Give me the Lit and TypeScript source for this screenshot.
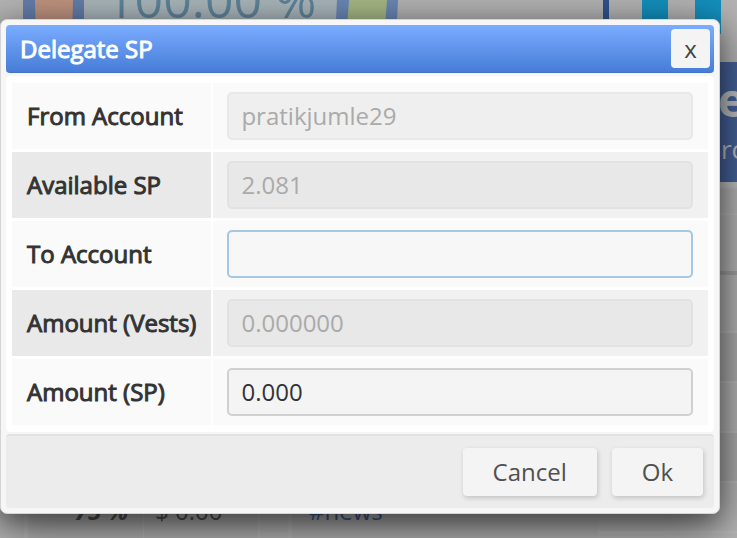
import { LitElement, html, css, svg } from "lit";
import { customElement } from "lit/decorators.js";

interface Field {
  id: string;
  label: string;
  value: string;
  disabled: boolean;
  active?: boolean;
}

const FIELDS: Field[] = [
  { id: "from", label: "From Account", value: "pratikjumle29", disabled: true },
  { id: "available", label: "Available SP", value: "2.081", disabled: true },
  { id: "to", label: "To Account", value: "", disabled: false, active: true },
  { id: "vests", label: "Amount (Vests)", value: "0.000000", disabled: true },
  { id: "sp", label: "Amount (SP)", value: "0.000", disabled: false },
];

@customElement("dashboard-backdrop")
class DashboardBackdrop extends LitElement {
  static styles = css`
    :host {
      display: grid;
      grid-template-columns: 1fr 139px;
      height: 100%;
      overflow: hidden;
      background: #b4b4b4;
      color: #505050;
      font-family: "Open Sans", sans-serif;
    }
    .main {
      display: flex;
      flex-direction: column;
      justify-content: space-between;
      min-width: 0;
    }
    .gauge {
      display: block;
      width: 598px;
      height: 40px;
    }
    .cards {
      display: grid;
      grid-template-columns: 236px 1fr;
      gap: 28px;
      padding-left: 24px;
    }
    .card {
      box-sizing: border-box;
      height: 36px;
      background: #b2b2b2;
      border-left: 4px solid #b8b8b8;
      font-size: 24px;
      line-height: 18px;
      white-space: nowrap;
    }
    .stats {
      display: grid;
      grid-template-columns: 116px 1fr;
      border-right: 2px solid #b8b8b8;
    }
    .share {
      padding-right: 15px;
      text-align: right;
      font-weight: 700;
      font-style: italic;
      border-right: 1px solid #b8b8b8;
    }
    .money {
      padding-left: 11px;
    }
    .tag {
      display: block;
      padding-left: 17px;
      color: #3a5b8f;
      text-decoration: none;
    }
    .side {
      display: flex;
      flex-direction: column;
      min-width: 0;
    }
    .bars {
      display: block;
      width: 139px;
      height: 62px;
    }
    .banner {
      box-sizing: border-box;
      height: 120px;
      padding: 10px 0 0 107px;
      background: #46629a;
      color: #c0c0c0;
      white-space: nowrap;
    }
    .big {
      padding-left: 13px;
      font-size: 46px;
      font-weight: 700;
      line-height: 54px;
    }
    .small {
      font-size: 26px;
      line-height: 46px;
    }
    .list {
      flex: 1;
      display: grid;
      grid-template-rows: 7px 26px 60px 58px;
      grid-auto-rows: 50px;
      overflow: hidden;
    }
    .item {
      border-bottom: 2px solid #b9b9b9;
    }
    .item:nth-child(odd) {
      background: #adadad;
    }
    .item:first-child {
      background: #c0c0c0;
    }
    .item:nth-child(3) {
      background: #b4b4b4;
      border-bottom: 4px solid #a0a0a0;
    }
  `;

  render() {
    return html`
      <div class="main">
        ${svg`<svg class="gauge" viewBox="0 0 598 40">
          <rect x="23" width="61" height="40" fill="#647fab" />
          <rect x="84" width="253" height="40" fill="#abb7bc" />
          <polygon points="35,0 73,0 72,40 36,40" fill="#c09480" />
          <polygon points="337,0 398,0 396,40 335,40" fill="#6b88b6" />
          <polygon points="349,0 387,0 384,40 346,40" fill="#a6b985" />
          <text x="106" y="18" font-size="50" fill="#60859b">100.00 %</text>
        </svg>`}
        <div class="cards">
          <div class="card stats">
            <span class="share">75 %</span>
            <span class="money">$ 0.00</span>
          </div>
          <div class="card"><a class="tag" href="#news">#news</a></div>
        </div>
      </div>
      <div class="side">
        ${svg`<svg class="bars" viewBox="0 0 139 62">
          <rect x="5" width="6" height="62" fill="#31538f" />
          <rect x="44" width="26" height="62" fill="#1390bd" />
          <rect x="97" width="26" height="34" fill="#1390bd" />
        </svg>`}
        <div class="banner">
          <div class="big">e</div>
          <div class="small">pro</div>
        </div>
        <div class="list">${[0, 1, 2, 3, 4, 5, 6, 7].map(() => html`<div class="item"></div>`)}</div>
      </div>
    `;
  }
}

@customElement("delegate-dialog")
class DelegateDialog extends LitElement {
  static styles = css`
    :host {
      display: block;
      box-sizing: border-box;
      padding: 5px;
      border: 1px solid #d4d4d4;
      border-radius: 7px;
      background: #f6f6f6;
      box-shadow: 0 12px 48px rgba(0, 0, 0, 0.6), 0 8px 20px rgba(0, 0, 0, 0.25);
      color: #333;
      font-family: "Open Sans", sans-serif;
      font-size: 24px;
      line-height: 32px;
    }
    * {
      box-sizing: border-box;
    }
    input,
    button {
      font: inherit;
      color: inherit;
      margin: 0;
    }
    header {
      display: flex;
      align-items: center;
      justify-content: space-between;
      height: 48px;
      padding: 0 4px 0 14px;
      border-radius: 4px;
      background: linear-gradient(#7aacff, #477dd8);
      border-bottom: 1px solid #4273c6;
      color: #fff;
    }
    h1 {
      margin: 0;
      font: inherit;
      -webkit-text-stroke: 1px currentColor;
    }
    .close {
      width: 39px;
      height: 39px;
      padding: 0;
      border: 0;
      border-radius: 4px;
      background: #f4f4f4;
      color: #444;
      font-size: 24px;
      line-height: 32px;
    }
    .body {
      margin-top: 3px;
      padding: 4px 6px;
      border-radius: 4px;
      background: #fff;
    }
    table {
      width: 100%;
      border-collapse: separate;
      border-spacing: 0 3px;
    }
    th,
    td {
      height: 66px;
      background: #fafafa;
    }
    th {
      width: 201px;
      padding: 0 15px;
      border-right: 2px solid #fff;
      background-clip: padding-box;
      font-weight: 400;
      text-align: left;
      white-space: nowrap;
      -webkit-text-stroke: 1px currentColor;
    }
    td {
      padding: 0 15px 0 14px;
    }
    tr:nth-child(even) th {
      background-color: #e9e9e9;
    }
    tr:nth-child(even) td {
      background-color: #f1f1f1;
    }
    input {
      display: block;
      width: 100%;
      height: 48px;
      padding: 0 12px 2px;
      border: 2px solid #d0d0d0;
      border-radius: 5px;
      background: #f4f4f4;
      outline: 0;
    }
    input:disabled {
      border-color: #e8e8e8;
      background: #efefef;
      color: #aaa;
    }
    tr:nth-child(even) input:disabled {
      border-color: #e2e2e2;
      background: #e8e8e8;
    }
    .active {
      border-color: #a6c6e4;
      background: #f7f7f7;
    }
    footer {
      display: flex;
      justify-content: flex-end;
      gap: 15px;
      margin-top: 2px;
      padding: 12px 11px 12px;
      border-top: 2px solid #e2e2e2;
      border-radius: 4px;
      background: #ececec;
    }
    .action {
      height: 48px;
      padding: 0 30px;
      border: 0;
      border-radius: 4px;
      background: #f4f4f4;
      box-shadow: 1px 2px 5px rgba(0, 0, 0, 0.18);
      color: #505050;
    }
  `;

  render() {
    return html`
      <header>
        <h1>Delegate SP</h1>
        <button class="close" aria-label="Close">x</button>
      </header>
      <div class="body">
        <table>
          ${FIELDS.map(
            (f) => html`<tr>
              <th scope="row"><label for=${f.id}>${f.label}</label></th>
              <td>
                <input
                  id=${f.id}
                  type="text"
                  class=${f.active ? "active" : ""}
                  .value=${f.value}
                  ?disabled=${f.disabled}
                />
              </td>
            </tr>`
          )}
        </table>
      </div>
      <footer>
        <button class="action">Cancel</button>
        <button class="action">Ok</button>
      </footer>
    `;
  }
}

@customElement("app-root")
class AppRoot extends LitElement {
  static styles = css`
    :host {
      display: block;
      position: relative;
      height: 100vh;
      overflow: hidden;
    }
    .dialog {
      position: absolute;
      top: 19px;
      left: 0;
      right: 17px;
    }
  `;

  render() {
    return html`
      <dashboard-backdrop></dashboard-backdrop>
      <delegate-dialog class="dialog" role="dialog" aria-label="Delegate SP"></delegate-dialog>
    `;
  }
}
